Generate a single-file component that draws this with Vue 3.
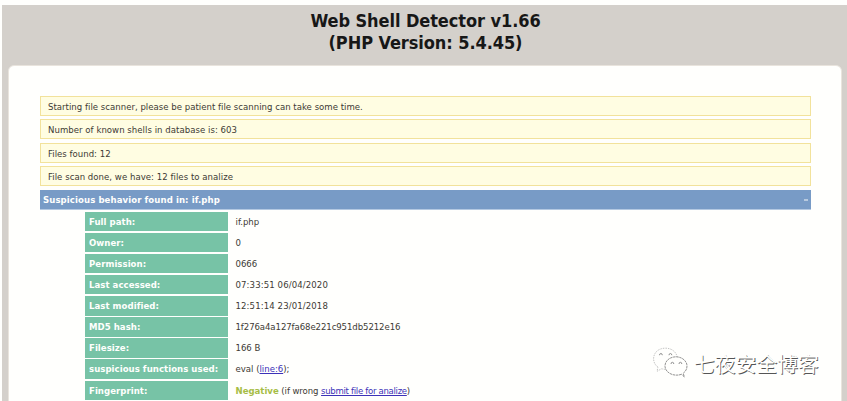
<script setup>
const messages = [
  'Starting file scanner, please be patient file scanning can take some time.',
  'Number of known shells in database is: 603',
  'Files found: 12',
  'File scan done, we have: 12 files to analize',
]
const details = [
  { label: 'Full path:', value: 'if.php' },
  { label: 'Owner:', value: '0' },
  { label: 'Permission:', value: '0666' },
  { label: 'Last accessed:', value: '07:33:51 06/04/2020', wide: true },
  { label: 'Last modified:', value: '12:51:14 23/01/2018', wide: true },
  { label: 'MD5 hash:', value: '1f276a4a127fa68e221c951db5212e16', tight: true },
  { label: 'Filesize:', value: '166 B' },
  { label: 'suspicious functions used:', value: 'eval (', link: 'line:6', after: ');' },
  { label: 'Fingerprint:', status: 'Negative', value: ' (if wrong ', link: 'submit file for analize', after: ')', tight: true },
]
</script>

<template>
  <div class="page">
    <header class="title">
      <h1>Web Shell Detector v1.66<br />(PHP Version: 5.4.45)</h1>
    </header>
    <main class="panel">
      <div class="messages">
        <p v-for="m in messages" :key="m" class="message">{{ m }}</p>
      </div>
      <div class="found"><span>Suspicious behavior found in: if.php</span><span class="toggle"></span></div>
      <dl class="details">
        <div v-for="d in details" :key="d.label" class="row">
          <dt>{{ d.label }}</dt>
          <dd :class="{ tight: d.tight, wide: d.wide }"><b v-if="d.status">{{ d.status }}</b>{{ d.value }}<a v-if="d.link" href="#">{{ d.link }}</a>{{ d.after }}</dd>
        </div>
      </dl>
    </main>
    <div class="watermark">
      <svg width="36" height="32" viewBox="0 0 36 32" fill="#fffffd" stroke="#aaa" stroke-width=".7">
        <path d="M6 21.200C-1.500 16 .5 3 12.500 2.200C20 1.800 25 6.500 25.200 12C25.200 18.500 19 23.500 12.500 23.300L9.500 22.800L5 25.300Z" stroke-dasharray="1.500 1" />
        <path d="M29.500 28.300C22 31 13.500 27 13 20.500C12.700 14.800 18 10.800 24 10.800C30 10.800 35 15 35 20C35 23.200 33.500 25.500 31.200 27.300L32.400 31Z" stroke="#666" stroke-dasharray="2.500 .6" />
        <g fill="none" stroke="#777" stroke-width=".8">
          <path d="M7.500 9.200a1.400 1.700 0 0 1 2.800 0M17 9.200a1.400 1.700 0 0 1 2.800 0M19 18a1.400 1.700 0 0 1 2.800 0M27 18a1.400 1.700 0 0 1 2.800 0" />
        </g>
      </svg>
      <span>七夜安全博客</span>
    </div>
  </div>
</template>

<style>
body { margin: 0; background: #fffffd; overflow: hidden; }
</style>

<style scoped>
.page {
  box-sizing: border-box;
  width: 847px;
  height: 401px;
  padding: 5px 0 0 2px;
  background: #d4d0cb content-box;
  overflow: hidden;
  position: relative;
  font-family: "DejaVu Sans Condensed", "DejaVu Sans", sans-serif;
  font-stretch: condensed;
  font-size: 9.5px;
  color: #3d3a34;
}
.title { height: 60px; padding-top: 5px; box-sizing: border-box; }
h1 {
  margin: 0 0 0 2px;
  font-size: 18px;
  font-weight: bold;
  line-height: 22px;
  letter-spacing: -.08px;
  color: #171717;
  text-align: center;
}
.panel {
  box-sizing: border-box;
  height: 345px;
  margin: 0 5px 0 6px;
  padding: 30px 30px 0 31px;
  border: 1px solid #e9e4dd;
  border-radius: 6px;
  background: #fffffd;
}
.messages { display: grid; grid-auto-rows: 20px; row-gap: 3.33px; }
.message {
  box-sizing: border-box;
  margin: 0;
  padding-left: 7px;
  border: 1px solid #f2e29b;
  background: #fffde2;
  line-height: 19px;
  letter-spacing: .02px;
}
.message:nth-child(even) { letter-spacing: .04px; }
.found {
  box-sizing: border-box;
  display: flex;
  justify-content: space-between;
  align-items: center;
  height: 20px;
  margin-top: 3.67px;
  padding: 1px 3px 0 3px;
  border-bottom: 1px solid #b4c9e2;
  background: #789bc6;
  color: #fffffd;
  font-weight: bold;
  letter-spacing: .09px;
}
.toggle { width: 4px; height: 2px; background: #b8cadf; }
.details { margin: 2px 0 0 45px; }
.row { display: flex; height: 21.12px; line-height: 20.6px; }
dt {
  box-sizing: border-box;
  width: 143px;
  height: 19.5px;
  padding-left: 4px;
  background: #77c3a6;
  color: #fffffd;
  font-weight: bold;
  letter-spacing: .05px;
}
dd { margin: 0 0 0 7.500px; white-space: pre; }
dd.tight { letter-spacing: -.08px; }
dd.wide { letter-spacing: .11px; }
dd b { color: #a6bd45; letter-spacing: 0; }
a { color: #3c32b8; }
.tight a { letter-spacing: -.3px; }
.watermark {
  position: absolute;
  left: 652px;
  top: 346px;
  display: flex;
  gap: 6px;
}
.watermark span {
  font: 400 20.8px/34px "Noto Sans CJK SC", sans-serif;
  color: #fffffd;
  text-shadow: .8px .8px 0 #555;
}
</style>
